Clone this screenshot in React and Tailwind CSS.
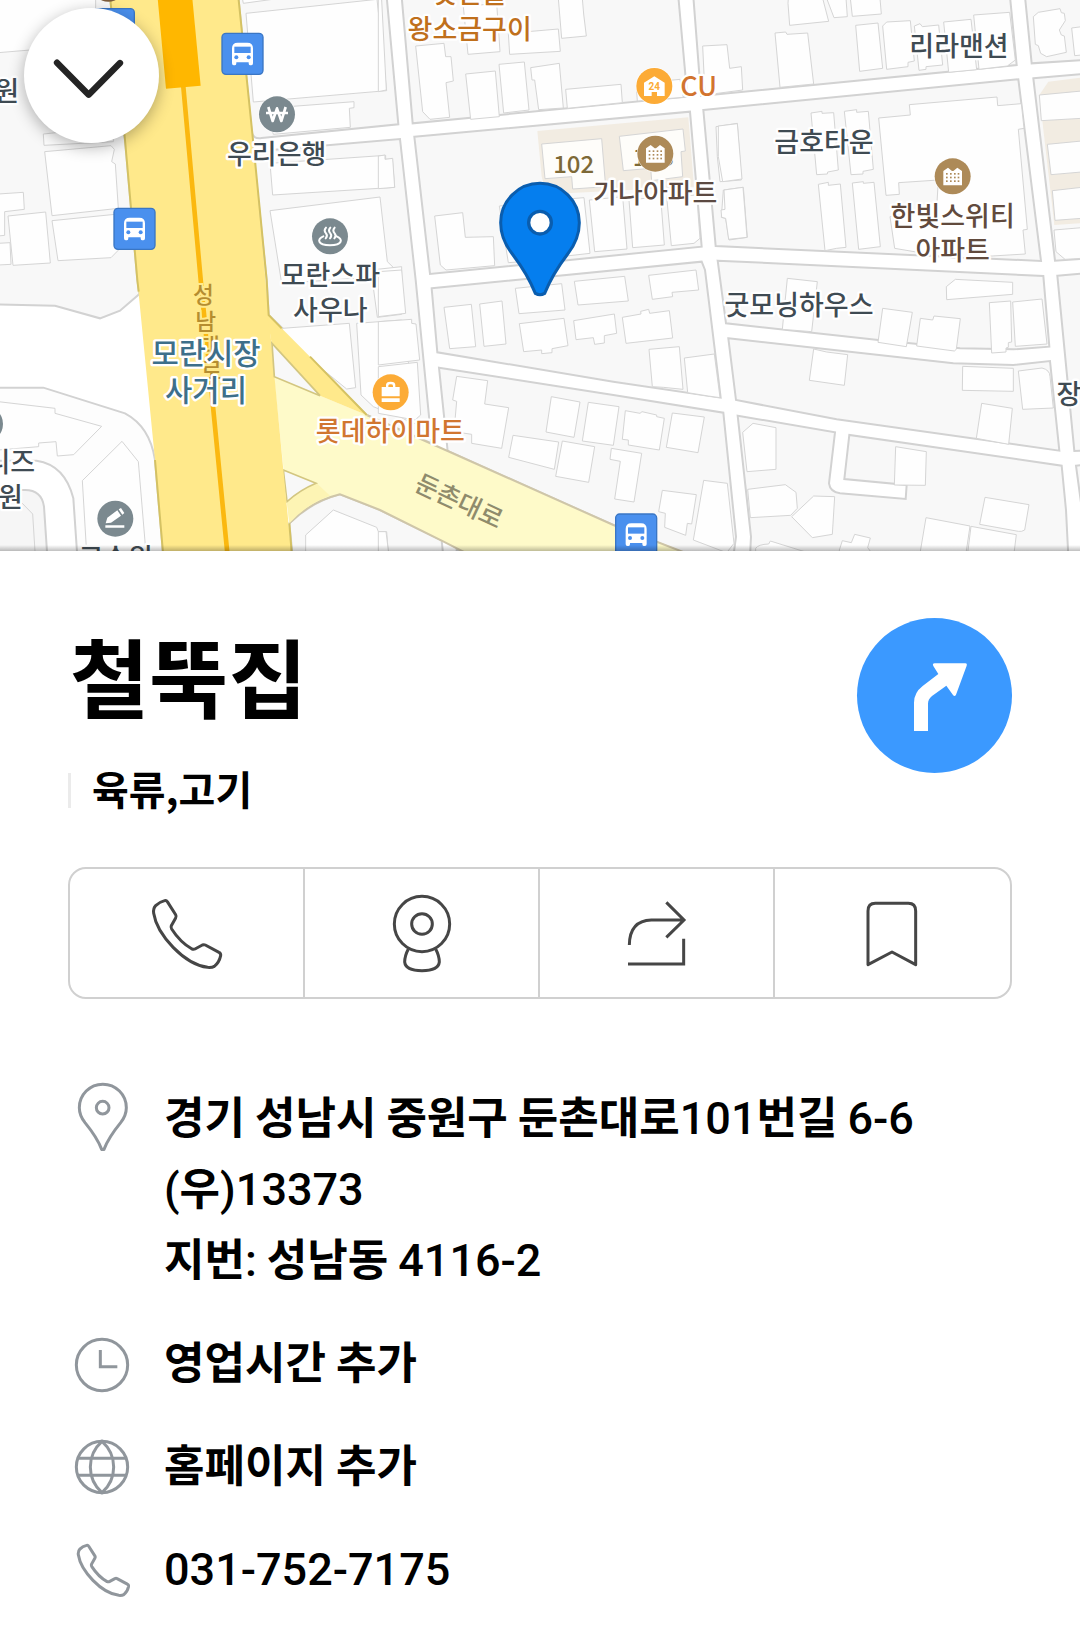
const MAP_FONT = "[font-family:'Noto_Sans_CJK_KR','Noto_Sans',sans-serif]";

// City blocks between the streets. One pixel of the map is three units.
const blocks = [
  "M-10 -10 H330 L375 420 L412 840 L418 882 L360 932 L300 955 L165 917 L-10 913Z",
  "M715 -10 L755 395 Q758 418 785 414 L1195 373 L1160 -10Z",
  "M760 455 L1200 417 L1247 840 L1295 1330 L1100 1245 L930 1075 L848 985 L806 945 L800 840Z",
  "M1205 -10 L1238 370 L2062 290 L2035 -10Z",
  "M1243 410 L2070 335 L2105 740 L1290 822Z",
  "M1295 865 L2105 785 L2115 810 L2162 1193 L1840 1145 L1312 1057Z",
  "M1317 1103 L1840 1185 L2170 1238 L2208 1610 L2200 1670 L2080 1670 L1840 1575 L1343 1353Z",
  "M2080 -10 L2103 288 L3050 195 L3030 -10Z",
  "M2110 330 L3055 238 L3123 783 L2147 738Z",
  "M2153 782 L3130 828 L3148 1040 L3040 1048 L2880 1045 L2635 1020 L2178 970Z",
  "M2185 1015 L2860 1090 L3040 1095 L3150 1083 L3178 1352 L2510 1258 L2208 1200Z",
  "M2213 1247 L2505 1297 L2487 1450 Q2490 1475 2520 1480 L2717 1497 L2720 1455 L2533 1437 L2548 1305 L3185 1397 L3198 1530 L3205 1670 L2250 1670 L2253 1610Z",
  "M3075 -10 L3095 190 L3250 180 V-10Z",
  "M3100 235 L3250 222 V776 L3165 782Z",
  "M3172 827 L3250 820 V1352 L3223 1353Z",
  "M3228 1397 L3250 1395 V1560Z",
  "M868 1570 Q935 1505 1020 1483 L1140 1530 L1325 1622 L1330 1670 H878Z",
  "M1370 1645 L1400 1670 H1370Z",
];

// Building outlines, grouped by map tile.
const tiles = [
  {
    id: "nw",
    at: "translate(0 0)",
    d: "M-5 -5 H287 V70 L90 150 L-5 158Z M130 402 L340 380 V425 L132 436Z M134 455 L333 437 L343 448 L335 485 L346 492 L355 625 L156 647Z M156 662 L375 640 L385 720 L333 773 L174 782Z M-5 582 L70 577 L73 628 L14 635 V706 L-5 708Z M24 648 L137 636 L151 789 L39 796Z M-5 730 L30 728 L33 793 L-5 795Z M738 40 L1131 -2 L1160 272 L760 306Z M800 325 L1062 305 V323 L1048 325 L1051 382 L820 403Z M810 490 L1157 466 V478 L1177 477 L1184 562 L818 585Z M810 632 L1140 591 L1162 785 L1190 812 L1140 830 L845 850Z M727 -5 L730 10 L840 -5Z",
  },
  {
    id: "n",
    at: "translate(1140 0)",
    d: "M107 138 L192 130 L197 170 L213 170 L220 243 L198 248 L209 352 L150 358 L128 335Z M257 222 L346 213 L358 350 L272 358Z M357 193 L433 186 L447 330 L371 339Z M452 203 L538 190 L550 324 L476 329 L464 240 L456 240Z M557 268 L723 253 L727 308 L562 325Z M250 20 L350 10 L360 155 L264 163Z M385 100 L535 87 L541 154 L389 163Z M535 -5 H607 L611 42 L619 108 L545 115Z M968 138 L1041 134 L1049 205 L1084 200 L1088 270 L975 285Z M770 275 L780 250 L900 238 L910 292 L772 303Z M1008 380 L1072 370 L1084 540 L1020 545 L1012 470Z M1030 570 L1090 562 L1102 712 L1047 720 L1037 655 L1024 652Z M-5 468 L15 465 V478 L38 475 L44 562 L-5 566Z M164 648 L248 638 L256 712 L340 710 L344 797 L198 810 L181 795Z M358 618 L480 605 L492 780 L385 788Z M500 602 L612 593 L630 760 L515 773Z M628 600 L728 590 L741 747 L644 755Z M747 600 L842 590 L853 735 L758 743Z M860 590 L950 585 L960 715 L942 730 L874 737Z M-5 -5 L5 0 L19 270 L-5 275Z",
  },
  {
    id: "ne",
    at: "translate(2160 0)",
    d: "M204 10 L205 -5 H308 L326 64 L209 76Z M320 -5 L342 53 L382 50 L378 -5Z M391 -5 L397 49 L484 42 L480 -5Z M165 99 L197 96 L201 103 L263 99 L281 252 L180 262Z M407 76 L474 69 L488 205 L419 214Z M488 78 L500 66 L571 62 L583 183 L564 187 V200 L500 208Z M583 78 L600 71 L607 80 L656 75 L668 195 L618 200 V208 L597 211Z M671 66 L753 58 L770 209 L686 217Z M761 45 L869 37 L886 180 L862 198 L777 208Z M940 50 L955 37 L1020 26 L1024 38 L1033 40 L1036 62 L1018 90 L1024 105 L1033 108 L1039 157 L980 170 L962 160 L955 137 L946 133Z M1055 84 L1085 80 V165 L1064 167Z M273 339 L306 334 V340 L341 338 L355 510 L323 516 L322 522 L290 524Z M373 334 L410 329 V337 L445 334 L460 508 L429 514 V522 L393 524Z M295 553 L325 547 V556 L361 552 L378 742 L350 745 L315 752Z M397 549 L430 545 V550 L462 547 L481 740 L416 748Z M476 354 L571 345 L568 314 L831 291 L833 317 L904 311 L912 385 L895 388 L922 688 L909 690 L916 762 L700 775 L524 745 L510 650 L650 625 L655 540 L536 548 L538 583 L498 586Z M-5 378 L52 371 L66 537 L8 545 L-5 470Z M12 570 L69 562 L81 712 L26 718 L17 655 L5 652 L3 630 L15 628Z M958 285 L1085 273 V355 L964 362Z M982 433 L1085 423 V516 L993 524Z M997 572 L1085 562 V655 L1005 661Z M1002 690 L1085 683 V775 L1035 778 L1008 755Z",
  },
  {
    id: "sw",
    at: "translate(0 810)",
    d: "M-5 395 L165 415 V430 L305 469 L221 554 L172 558 L168 515 L116 519 V530 L-5 540Z M247 632 L366 514 L415 575 L438 850 H260Z M917 850 V795 L1000 720 L1130 772 L1135 785 L1160 785 L1165 850Z M847 175 L1048 160 L1067 353 L1040 357 L848 200Z M1070 160 L1205 150 L1255 465 L1120 410 L1083 375Z M1113 0 L1205 -10 V133 L1132 142Z",
  },
  {
    id: "s",
    at: "translate(1140 810)",
    d: "M192 112 L274 103 L287 230 L209 236Z M299 102 L366 93 L378 222 L312 229Z M406 55 L545 41 L555 120 L417 131Z M583 34 L734 19 L745 93 L594 105Z M806 16 L948 0 L956 60 L876 67 L878 80 L817 88Z M418 161 L552 145 L564 227 L516 236 V248 L485 251 V240 L431 245Z M581 152 L703 132 L710 190 L673 197 V219 L644 223 L640 203 L588 209Z M727 142 L783 132 L782 124 L806 118 L809 130 L868 122 L878 204 L738 220Z M807 238 L898 230 L909 358 L850 352 L817 350Z M913 264 L1003 252 L1020 383 L985 378 L923 368Z M230 319 L323 332 L314 402 L386 413 L365 535 L275 520 V493 L222 485 L230 394 L218 390Z M514 380 L600 396 L582 502 L498 486Z M625 397 L717 410 L700 526 L607 513Z M736 422 L780 430 L786 425 L830 435 V440 L853 445 L838 540 L745 525 V510 L727 508Z M877 429 L973 441 L954 548 L859 532Z M399 496 L536 516 L523 598 L386 562Z M547 513 L644 530 L626 637 L527 619Z M694 535 L785 550 L762 696 L704 687 L721 574 L690 568Z M847 661 L949 674 L935 762 L922 760 L917 796 L854 772 L856 730 L836 725Z M971 631 L1042 640 L1062 820 L1040 848 L940 810Z M-5 5 L65 0 L77 130 L-5 140Z M-5 155 L95 148 V160 L108 162 L119 270 L-5 285Z M-5 290 L112 277 L122 435 L105 450 L-5 430Z M-5 785 H18 L26 850 H-5Z",
  },
  {
    id: "se",
    at: "translate(2160 810)",
    d: "M202 25 L292 35 L275 185 L187 178Z M679 50 L706 28 L878 37 V73 L680 89Z M488 115 L577 127 L559 230 L474 217Z M601 145 L638 150 L642 138 L721 146 L709 238 L703 243 L590 228Z M808 98 L872 93 L875 216 L865 218 V232 L858 234 V246 L815 249Z M878 96 L966 87 L981 222 L886 229Z M281 237 L320 246 L383 254 L373 346 L268 331Z M728 289 L880 295 V364 L727 361Z M895 303 L966 294 Q990 300 990 320 L1000 414 L908 418Z M785 400 L877 415 L866 523 L769 505Z M68 487 L99 460 L168 473 V598 L81 605Z M83 658 L196 644 L228 667 L232 715 L212 736 L91 743Z M215 740 L281 678 L344 680 L337 793 L277 803Z M527 530 L619 545 L616 646 L523 645Z M795 682 L927 704 L914 780 Q905 786 895 784 L779 763Z M618 743 L750 768 L738 850 H600Z M753 769 L889 794 L882 850 H743Z M107 835 Q115 823 146 822 L151 813 L270 850 H107Z M358 840 L367 812 L394 818 L404 793 L451 804 L443 833 L456 850 H358Z",
  },
];

const labels = [
  { t: "원", x: 20, y: 302 },
  { t: "우리은행", x: 830, y: 492 },
  { t: "모란스파", x: 991, y: 855 },
  { t: "사우나", x: 991, y: 960 },
  { t: "맛찬들", x: 1409, y: 10, c: "fill-[#c0701c]" },
  { t: "왕소금구이", x: 1409, y: 116, c: "fill-[#c0701c]" },
  { t: "CU", x: 2096, y: 288, c: "fill-[#d2742f]" },
  { t: "가나아파트", x: 1966, y: 609, c: "fill-[#5c4a42]" },
  { t: "리라맨션", x: 2877, y: 168 },
  { t: "금호타운", x: 2472, y: 456 },
  { t: "한빛스위티", x: 2858, y: 677, c: "fill-[#614a3d]" },
  { t: "아파트", x: 2858, y: 780, c: "fill-[#614a3d]" },
  { t: "굿모닝하우스", x: 2397, y: 945 },
  { t: "장", x: 3207, y: 1213 },
  { t: "롯데하이마트", x: 1171, y: 1324, c: "fill-[#d17630]" },
  { t: "니즈", x: 31, y: 1416 },
  { t: "원", x: 31, y: 1522 },
  { t: "고수위", x: 347, y: 1704 },
];

function Bus({ x, y }) {
  return (
    <g transform={`translate(${x} ${y})`}>
      <rect x="2" y="2" width="123" height="123" rx="12" fill="#4a90ee" stroke="#3a76c4" strokeWidth="4" />
      <path
        d="M32 47 Q32 30 49 30 H78 Q95 30 95 47 V92 Q95 98 90 98 H86 Q82 98 82 92 V89 H45 V92 Q45 98 41 98 H37 Q32 98 32 92Z"
        fill="#fff"
      />
      <path d="M39 42 H88 V61 H39Z" fill="#4a90ee" />
      <circle cx="45" cy="74" r="6" fill="#4a90ee" />
      <circle cx="82" cy="74" r="6" fill="#4a90ee" />
    </g>
  );
}

function Poi({ x, y, color, children }) {
  return (
    <g transform={`translate(${x} ${y})`}>
      <circle r="56" fill="#fff" fillOpacity=".8" />
      <circle r="54" fill={color} />
      {children}
    </g>
  );
}

function Towers() {
  return (
    <>
      <path d="M-28 27 V-16 L-14 -26 L-2 -16 H2 L14 -26 L28 -16 V27Z" fill="#fff" />
      <g fill="#ad8a58">
        {[-10, 1, 12].map((y) =>
          [-20, -8, 4, 15].map((x) => <rect key={`${x}${y}`} x={x} y={y} width="5" height="5" />)
        )}
      </g>
    </>
  );
}

function StreetMap() {
  return (
    <svg viewBox="0 0 3240 1653" className="block w-full" role="img" aria-label="철뚝집 주변 지도">
      <rect width="3240" height="1653" fill="#fff" />
      <path d="M-10 1163 H130 L375 1240 Q450 1280 465 1380 L490 1670 H232 L220 1495 Q195 1395 110 1382 H-10Z" fill="#fdfdfd" stroke="#d2d2d2" strokeWidth="6" />
      <path d="M-10 1470 H75 Q125 1470 132 1520 L142 1670 H-10Z" fill="#f6f6f6" stroke="#d2d2d2" strokeWidth="6" />
      <path d="M65 1508 L98 1542 L106 1670" fill="none" stroke="#d5d5d5" strokeWidth="3" />
      <g fill="#f8f8f8" stroke="#d2d2d2" strokeWidth="6">
        {blocks.map((d) => (
          <path key={d} d={d} />
        ))}
      </g>
      <path d="M1612 393 L2065 352 L2082 560 L1640 583 L1625 530Z" fill="#f2ece2" />
      <path d="M3118 285 L3145 245 L3240 233 V670 L3163 675Z" fill="#f2ece2" />
      {tiles.map((t) => (
        <path key={t.id} d={t.d} transform={t.at} fill="#fefefe" stroke="#d5d5d5" strokeWidth="3" />
      ))}
      <g fill="#fefdfa" stroke="#d5d5d5" strokeWidth="3">
        <path d="M1625 432 L1805 416 L1817 560 L1718 567 L1715 530 L1635 536Z" />
        <path d="M1858 409 L2049 387 L2056 453 L2043 455 L2048 530 L1955 542 L1952 505 L1870 512Z" />
      </g>

      <path d="M822 1128 L960 1187 L1100 1245 L1343 1353 L1840 1575 L2060 1660 H1400 L1325 1622 L1140 1530 L1020 1483 Q930 1505 868 1570 L850 1400Z" fill="#fefac9" />
      <path d="M1100 1245 L1343 1353 L1840 1575 L2060 1660 M868 1570 Q930 1505 1020 1483 L1140 1530 L1325 1622 L1400 1660" fill="none" stroke="#cfc6a8" strokeWidth="6" />
      <path d="M860 1505 Q905 1470 950 1450 L990 1487 Q920 1512 868 1570Z" fill="#fdf4b4" />
      <path d="M850 1410 L948 1450 Q900 1470 861 1505Z" fill="#f8f8f8" stroke="#d3c680" strokeWidth="5" />

      <path d="M330 -10 L375 420 L412 840 L465 1380 L490 1670 H875 L850 1410 L806 945 L757 400 L715 -10Z" fill="#ffe98b" />
      <path d="M800 940 L845 985 L930 1070 L1105 1247 L960 1187 L815 1030Z" fill="#ffe98b" />
      <path d="M330 -10 L375 420 L412 840 L416 875 M465 1380 L490 1670 M715 -10 L757 400 L800 840 L806 945 L845 985 M930 1070 L1100 1245 M868 1570 L876 1670" fill="none" stroke="#d5c263" strokeWidth="6" />
      <path d="M816 1030 L823 1130 L960 1187Z" fill="#f8f8f8" stroke="#d3c680" strokeWidth="5" />
      <path d="M550 260 L603 850 L683 1670" fill="none" stroke="#fbb810" strokeWidth="14" />
      <path d="M473 -5 H577 L602 257 L498 266Z" fill="#ffb700" />

      <g className={MAP_FONT} textAnchor="middle">
        <g fontSize="68" fontWeight="500" fill="#b58d30" stroke="#ffe98b" strokeWidth="12" paintOrder="stroke">
          <text x="610" y="909">성</text>
          <text x="617" y="989">남</text>
          <text x="628" y="1066">대</text>
          <text x="634" y="1138">로</text>
        </g>
        <text transform="translate(1366 1528) rotate(25)" fontSize="76" fontWeight="500" fill="#8f8b6c">
          둔촌대로
        </text>
        <g fontSize="72" fontWeight="500" fill="#7d6937">
          <text x="1721" y="520">102</text>
          <text x="1960" y="497">103</text>
        </g>
      </g>

      <circle cx="325" cy="-45" r="50" fill="#7d5d3c" />
      <Bus x={278} y={24} />
      <Bus x={664} y={98} />
      <Bus x={340} y={623} />
      <Bus x={1845} y={1540} />

      <Poi x={831} y={343} color="#7b898f">
        <path d="M-26 -22 L-13 20 L0 -18 L13 20 L26 -22 M-33 -4 H33" fill="none" stroke="#fff" strokeWidth="8" strokeLinejoin="round" />
      </Poi>
      <Poi x={990} y={709} color="#7b898f">
        <path d="M-20 0 C-40 8 -38 26 0 27 C38 26 40 8 20 0 M-12 -26 q-8 9 0 17 q6 7 -1 15 M1 -26 q-8 9 0 17 q6 7 -1 15 M14 -26 q-8 9 0 17 q6 7 -1 15" fill="none" stroke="#fff" strokeWidth="6" strokeLinecap="round" />
      </Poi>
      <Poi x={1963} y={258} color="#fcab36">
        <path d="M-31 30 V-10 L0 -29 L31 -10 V30 H8 V18 H-8 V30Z" fill="#fff" />
        <text y="11" textAnchor="middle" fontSize="30" fontWeight="700" fill="#fcab36" className="[font-family:Roboto,sans-serif]">
          24
        </text>
      </Poi>
      <Poi x={1966} y={461} color="#ad8a58">
        <Towers />
      </Poi>
      <Poi x={2858} y={529} color="#ad8a58">
        <Towers />
      </Poi>
      <Poi x={346} y={1556} color="#7b898f">
        <path d="M-29 14 L-24 -3 L6 -25 L17 -9 L-13 12Z M10 -28 L17 -32 L27 -17 L21 -12Z M-30 20 H27 V27 H-30Z" fill="#fff" />
      </Poi>
      <Poi x={1172} y={1177} color="#fcab36">
        <path d="M-27 -16 H-14 V-22 Q-14 -32 0 -32 Q14 -32 14 -22 V-16 H27 V12 H-27Z M-27 18 H27 V29 H-27Z" fill="#fff" />
        <path d="M-7 -16 V-20 Q-7 -24 0 -24 Q7 -24 7 -20 V-16Z" fill="#fcab36" />
      </Poi>
      <Poi x={-45} y={1272} color="#7b898f" />

      <g className={MAP_FONT} textAnchor="middle" fontSize="81" fontWeight="500" stroke="#fff" strokeWidth="14" strokeLinejoin="round" paintOrder="stroke">
        {labels.map((l) => (
          <text key={`${l.t}${l.y}`} x={l.x} y={l.y} className={l.c || "fill-[#3f4b53]"}>
            {l.t}
          </text>
        ))}
        <g fontSize="89" className="fill-[#3d6f8a]">
          <text x="618" y="1092">모란시장</text>
          <text x="618" y="1202">사거리</text>
        </g>
      </g>

      <path
        d="M1502 668 A118 118 0 0 1 1738 668 C1738 705 1724 735 1703 762 C1678 795 1652 835 1634 880 Q1620 888 1606 880 C1588 835 1562 795 1537 762 C1516 735 1502 705 1502 668Z"
        fill="#057eee"
        stroke="#0a5dae"
        strokeWidth="9"
      />
      <circle cx="1620" cy="668" r="34" fill="#fff" stroke="#0a5dae" strokeWidth="10" />
    </svg>
  );
}

const HANDSET =
  "M341 152 Q346 150 349 155 L374 194 Q377 199 374 204 L361 227 Q359 232 362 237 C378 262 400 284 423 297 Q428 299 432 297 L454 285 Q459 283 463 285 L504 307 Q510 310 509 317 C506 331 499 342 490 349 Q483 353 470 352 C400 343 318 255 308 190 Q306 175 314 167 Q325 156 341 152Z";

const actions = [
  { label: "전화", box: "288 129 240 240", draw: <path d={HANDSET} /> },
  {
    label: "로드뷰",
    box: "993 129 240 240",
    draw: (
      <>
        <circle cx="1113" cy="222" r="83" />
        <circle cx="1113" cy="222" r="31" />
        <path d="M1072 297 Q1061 318 1061 336 Q1064 362 1113 362 Q1162 362 1165 336 Q1165 318 1154 297" />
      </>
    ),
  },
  {
    label: "공유",
    box: "264 129 240 240",
    draw: <path d="M412 157 L465 210 L412 262 M465 210 H367 Q302 212 301 285 M297 342 H464 V266" />,
  },
  {
    label: "저장",
    box: "971 129 240 240",
    draw: <path d="M1016 344 V183 Q1016 160 1038 160 H1137 Q1159 160 1159 183 V344 L1088 306Z" strokeLinejoin="round" />,
  },
];

function InfoRow({ box, icon, children }) {
  return (
    <li className="flex items-start gap-[34px]">
      <svg viewBox={box} className="h-[71px] w-14 shrink-0 fill-none stroke-[#90969c]" strokeWidth="9" aria-hidden="true">
        {icon}
      </svg>
      <div className="min-w-0 flex-1">{children}</div>
    </li>
  );
}

function Num({ children }) {
  return <span className="text-[45px] leading-none font-medium [font-family:Roboto,sans-serif]">{children}</span>;
}

export default function App() {
  return (
    <div className="min-h-screen bg-white text-black [font-family:'Noto_Sans_CJK_KR','Noto_Sans',sans-serif]">
      <section className="relative">
        <StreetMap />
        <div className="absolute inset-x-0 bottom-0 h-1.5 bg-linear-to-b from-transparent to-black/25" />
        <button
          type="button"
          aria-label="닫기"
          className="absolute top-2 left-6 flex size-[135px] items-center justify-center rounded-full bg-white shadow-[0_4px_16px_rgba(0,0,0,0.3)]"
        >
          <svg viewBox="72 24 405 405" className="size-full" aria-hidden="true">
            <path d="M171 188 L266 284 L360 189" fill="none" stroke="#242424" strokeWidth="19" strokeLinecap="round" strokeLinejoin="round" />
          </svg>
        </button>
      </section>

      <main className="px-[68px] pt-[67px] pb-8">
        <header className="flex items-start justify-between">
          <div className="pt-[7px]">
            <h1 className="pl-0.5 text-[86px] leading-[100px] font-bold">철뚝집</h1>
            <div className="mt-[38px] flex items-center gap-[21px]">
              <span className="mt-1 h-[35px] w-[3px] bg-[#ebebeb]" />
              <p className="text-[40px] leading-[50px] font-bold">육류,고기</p>
            </div>
          </div>
          <a href="#route" aria-label="길찾기" className="size-[155px] shrink-0 rounded-full bg-[#3b99ff]">
            <svg viewBox="111 54 465 465" className="size-full" aria-hidden="true">
              <path
                d="M282 393 V308 Q282 278 308 258 L355 222 L340 198 Q336 190 344 190 H436 Q442 190 440 197 L408 284 Q404 291 399 285 L379 257 L336 288 Q324 298 324 311 V393Z"
                fill="#fff"
              />
            </svg>
          </a>
        </header>

        <nav className="mt-[54px] grid h-[132px] grid-cols-4 divide-x-2 divide-[#d0d0d0] rounded-[18px] border-2 border-[#d0d0d0]">
          {actions.map((a) => (
            <button key={a.label} type="button" aria-label={a.label} className="flex items-center justify-center">
              <svg viewBox={a.box} className="size-20 fill-none stroke-[#464646]" strokeWidth="9" aria-hidden="true">
                {a.draw}
              </svg>
            </button>
          ))}
        </nav>

        <ul className="mt-[81px] flex flex-col gap-8 px-1.5 text-[44px] leading-[71px] font-bold">
          <InfoRow
            box="72 60 168 213"
            icon={
              <>
                <path d="M88 143 A70 70 0 0 1 229 143 C229 160 222 175 212 188 C190 215 175 235 162 268 Q158 272 155 268 C142 235 127 215 105 188 C95 175 88 160 88 143Z" />
                <circle cx="158" cy="143" r="19" />
              </>
            }
          >
            <p>
              경기 성남시 중원구 둔촌대로<Num>101</Num>번길 <Num>6-6</Num>
            </p>
            <p>
              <Num>(</Num>우<Num>)13373</Num>
            </p>
            <p>
              지번<Num>:</Num> 성남동 <Num>4116-2</Num>
            </p>
          </InfoRow>
          <InfoRow
            box="72 45 168 213"
            icon={
              <>
                <circle cx="156" cy="165" r="77" />
                <path d="M151 120 V170 H202" />
              </>
            }
          >
            <a href="#hours">영업시간 추가</a>
          </InfoRow>
          <InfoRow
            box="72 354 168 213"
            icon={
              <>
                <circle cx="156" cy="471" r="77" />
                <path d="M84 445 H228 M84 496 H228 M156 394 Q121 425 121 471 Q121 517 156 548 Q191 517 191 471 Q191 425 156 394Z" />
              </>
            }
          >
            <a href="#homepage">홈페이지 추가</a>
          </InfoRow>
          <InfoRow
            box="72 663 168 213"
            icon={<path transform="translate(-146 592) scale(.75)" strokeWidth="12" d={HANDSET} />}
          >
            <a href="tel:031-752-7175">
              <Num>031-752-7175</Num>
            </a>
          </InfoRow>
        </ul>
      </main>
    </div>
  );
}
